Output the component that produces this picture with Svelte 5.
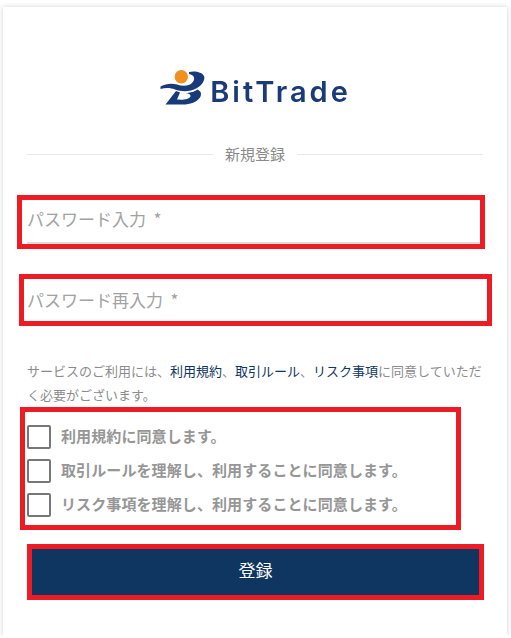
<script>
  const terms = [
    '利用規約に同意します。',
    '取引ルールを理解し、利用することに同意します。',
    'リスク事項を理解し、利用することに同意します。'
  ];
</script>

<main class="card">
  <div class="logo">
    <svg class="mark" viewBox="0 0 46 40" width="46" height="40" aria-hidden="true">
      <circle cx="22.3" cy="8.7" r="6.7" fill="#f0911f" />
      <path d="M30 4C36 2.5 43 4 45 8C46.5 12 43 17 38 20C31 24 23 24 16 21.5C12 20 7 19.5 1.5 21L1.5 18.5C7 15.5 13 15 18 16.5C24 18.5 30 18 33 15C36.5 11.5 36 7 30 6Z" fill="#173a7c" />
      <path d="M17 23L21 24.5L18 31.5C24 32 30 31.5 31.5 28.5C32 26.5 30 25.5 27 25.2C33 24.5 37 23 38.5 21.5C42 23 43 26 41 29.5C38 34 31 36.5 24 36.5L6.5 36.5Z" fill="#173a7c" />
    </svg>
    <span class="wordmark">BitTrade</span>
  </div>

  <div class="divider"><span>新規登録</span></div>

  <form class="form" onsubmit={(e) => e.preventDefault()}>
    <label class="field first"><input type="password" placeholder="パスワード入力&nbsp;&nbsp;*" /></label>
    <label class="field second"><input type="password" placeholder="パスワード再入力&nbsp;&nbsp;*" /></label>

    <p class="notice">
      <span>サービスのご利用には、</span><a href="#terms">利用規約</a><span>、</span><a href="#rules">取引ルール</a><span>、</span><a href="#risk">リスク事項</a><span>に同意していただ</span><br /><span>く必要がございます。</span>
    </p>

    <ul class="terms">
      {#each terms as term}
        <li><label><input type="checkbox" /><span>{term}</span></label></li>
      {/each}
    </ul>

    <button type="submit">登録</button>
  </form>

  <div class="mark-box box-1"></div>
  <div class="mark-box box-2"></div>
  <div class="mark-box box-3"></div>
  <div class="mark-box box-4"></div>
</main>

<style>
  :global(body) {
    margin: 0;
    background: #fff;
    font-family: "Noto Sans CJK JP", "Noto Sans", sans-serif;
  }
  .card {
    position: relative;
    box-sizing: border-box;
    width: 504px;
    height: 629px;
    margin: 7px 0 0 3px;
    padding: 0 24px;
    background: #fff;
    box-shadow: 0 0 5px rgba(0, 0, 0, 0.18);
  }
  .logo {
    display: flex;
    justify-content: center;
    gap: 5px;
    height: 40px;
    padding-top: 61px;
    filter: blur(0.4px);
  }
  .mark {
    flex: none;
  }
  .wordmark {
    align-self: flex-end;
    margin-bottom: 2px;
    font-family: Inter, sans-serif;
    font-weight: 600;
    font-size: 29px;
    line-height: 1;
    color: #1b3a78;
    letter-spacing: 3px;
    white-space: nowrap;
  }
  .divider {
    display: flex;
    align-items: center;
    gap: 12px;
    margin-top: 34px;
    height: 24px;
    font-size: 15px;
    line-height: 24px;
    color: #8a8a8a;
  }
  .divider::before,
  .divider::after {
    content: "";
    flex: 1;
    height: 1px;
    background: #e8e8e8;
  }
  .form {
    display: flex;
    flex-direction: column;
  }
  .field {
    display: block;
  }
  .field.first {
    margin-top: 32px;
  }
  .field.second {
    margin-top: 35px;
  }
  input[type="password"] {
    display: block;
    box-sizing: border-box;
    width: 453px;
    height: 46px;
    padding: 0 0 3px;
    border: 0;
    border-bottom: 2px solid #dcdcdc;
    background: transparent;
    font: inherit;
    font-size: 17px;
    outline: none;
  }
  input::placeholder {
    color: #a2a2a2;
    opacity: 1;
  }
  .notice {
    margin: 34px 0 0;
    font-size: 13px;
    line-height: 24px;
    color: #8c8c8c;
  }
  .notice a {
    color: #0e3660;
    text-decoration: none;
  }
  .terms {
    display: flex;
    flex-direction: column;
    gap: 10px;
    margin: 18px 0 0;
    padding: 0;
    list-style: none;
  }
  .terms label {
    display: flex;
    align-items: center;
    gap: 10px;
    height: 24px;
    font-size: 15px;
    line-height: 22px;
    font-weight: 700;
    letter-spacing: 0.1px;
    color: #969696;
  }
  .terms span {
    margin-top: -2px;
  }
  input[type="checkbox"] {
    appearance: none;
    flex: none;
    box-sizing: border-box;
    width: 24px;
    height: 24px;
    margin: 0;
    border: 2px solid #777;
    border-radius: 2px;
    background: #fff;
  }
  button {
    box-sizing: border-box;
    width: 457px;
    height: 56px;
    margin-top: 27px;
    padding: 0 0 6px;
    border: 0;
    border-radius: 0;
    background: #0e3660;
    color: #fff;
    font: inherit;
    font-size: 17px;
  }
  .mark-box {
    position: absolute;
    box-sizing: border-box;
    border: 5px solid #ed1c24;
    pointer-events: none;
  }
  .box-1 { left: 14px; top: 188px; width: 468px; height: 54px; }
  .box-2 { left: 16px; top: 267px; width: 473px; height: 52px; }
  .box-3 { left: 17px; top: 400px; width: 441px; height: 123px; }
  .box-4 { left: 24px; top: 537px; width: 457px; height: 56px; }
</style>
